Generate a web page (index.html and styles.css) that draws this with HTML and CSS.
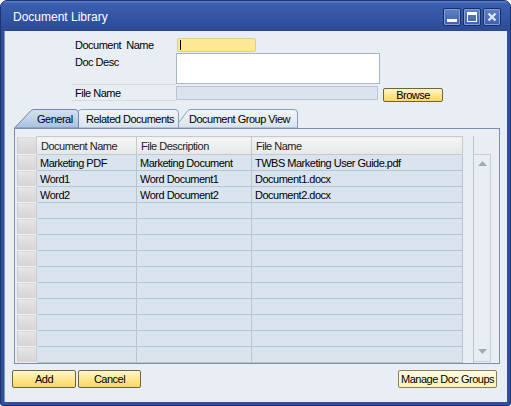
FILE: index.html
```html
<!DOCTYPE html>
<html lang="en">

<head>
  <meta charset="UTF-8">
  <meta name="viewport" content="width=device-width, initial-scale=1.0">
  <title>Document Library</title>
  <link rel="stylesheet" href="styles.css">
</head>

<body>
  <div class="window">

    <div class="titlebar">
      <span class="title">Document Library</span>
      <div class="caption-buttons">
        <span class="caption-btn">
          <svg width="16" height="16" viewBox="0 0 16 16"><rect x="3" y="10" width="10" height="3" fill="#fff"/></svg>
        </span>
        <span class="caption-btn">
          <svg width="16" height="16" viewBox="0 0 16 16"><rect x="3.5" y="3.5" width="9" height="9" fill="none" stroke="#fff"/><rect x="3" y="3" width="10" height="3" fill="#fff"/></svg>
        </span>
        <span class="caption-btn">
          <svg width="16" height="16" viewBox="0 0 16 16"><path d="M4.5 4.5 L11.5 11.5 M11.5 4.5 L4.5 11.5" stroke="#e4ebf8" stroke-width="2.2"/></svg>
        </span>
      </div>
    </div>

    <div class="content">

      <div class="form">
        <div class="form-row row-name">
          <label class="form-label">Document&nbsp; Name</label>
          <div class="field field-name"><span class="caret"></span></div>
        </div>
        <div class="form-row row-desc">
          <label class="form-label">Doc Desc</label>
          <div class="field field-desc"></div>
        </div>
        <div class="form-row row-file">
          <label class="form-label">File Name</label>
          <div class="field field-file"></div>
          <button class="btn btn-browse">Browse</button>
        </div>
      </div>

      <div class="tabs">
        <div class="tab tab-general active">
          <svg class="tab-shape" width="65" height="19" viewBox="0 0 65 19">
            <defs>
              <linearGradient id="tabOn" x1="0" y1="0" x2="0" y2="1">
                <stop offset="0" stop-color="#d4e2f2"/>
                <stop offset="1" stop-color="#a9c1df"/>
              </linearGradient>
            </defs>
            <path d="M0.5 19 L16.5 2 Q18 0.5 20 0.5 L61 0.5 Q64.5 0.5 64.5 4 L64.5 19 Z" fill="url(#tabOn)" stroke="#6f89ab"/>
          </svg>
          <span class="tab-label">General</span>
        </div>
        <div class="tab tab-related">
          <svg class="tab-shape" width="117" height="19" viewBox="0 0 117 19">
            <defs>
              <linearGradient id="tabOff" x1="0" y1="0" x2="0" y2="1">
                <stop offset="0" stop-color="#f1f5f9"/>
                <stop offset="1" stop-color="#d9e3ee"/>
              </linearGradient>
            </defs>
            <path d="M0.5 19 L16.5 2 Q18 0.5 20 0.5 L113 0.5 Q116.5 0.5 116.5 4 L116.5 19 Z" fill="url(#tabOff)" stroke="#8a9fb8"/>
          </svg>
          <span class="tab-label">Related Documents</span>
        </div>
        <div class="tab tab-group">
          <svg class="tab-shape" width="124" height="19" viewBox="0 0 124 19">
            <path d="M0.5 19 L13.5 2 Q15 0.5 17 0.5 L120 0.5 Q123.5 0.5 123.5 4 L123.5 19 Z" fill="url(#tabOff)" stroke="#8a9fb8"/>
          </svg>
          <span class="tab-label">Document Group View</span>
        </div>
      </div>

      <div class="tab-panel">
        <div class="grid-box">
          <table class="grid">
            <colgroup>
              <col class="col-rh">
              <col class="col-name">
              <col class="col-desc">
              <col class="col-file">
            </colgroup>
            <thead>
              <tr>
                <th class="rh"></th>
                <th>Document Name</th>
                <th>File Description</th>
                <th>File Name</th>
              </tr>
            </thead>
            <tbody>
              <tr><td class="rh"></td><td>Marketing PDF</td><td>Marketing Document</td><td>TWBS Marketing User Guide.pdf</td></tr>
              <tr><td class="rh"></td><td>Word1</td><td>Word Document1</td><td>Document1.docx</td></tr>
              <tr><td class="rh"></td><td>Word2</td><td>Word Document2</td><td>Document2.docx</td></tr>
              <tr><td class="rh"></td><td></td><td></td><td></td></tr>
              <tr><td class="rh"></td><td></td><td></td><td></td></tr>
              <tr><td class="rh"></td><td></td><td></td><td></td></tr>
              <tr><td class="rh"></td><td></td><td></td><td></td></tr>
              <tr><td class="rh"></td><td></td><td></td><td></td></tr>
              <tr><td class="rh"></td><td></td><td></td><td></td></tr>
              <tr><td class="rh"></td><td></td><td></td><td></td></tr>
              <tr><td class="rh"></td><td></td><td></td><td></td></tr>
              <tr><td class="rh"></td><td></td><td></td><td></td></tr>
              <tr><td class="rh"></td><td></td><td></td><td></td></tr>
            </tbody>
          </table>
          <div class="scrollbar">
            <div class="scroll-track">
              <svg width="9" height="5" viewBox="0 0 9 5"><path d="M0 5 L4.5 0 L9 5 Z" fill="#a3abb5"/></svg>
              <svg width="9" height="5" viewBox="0 0 9 5"><path d="M0 0 L4.5 5 L9 0 Z" fill="#a3abb5"/></svg>
            </div>
          </div>
        </div>
      </div>

      <div class="footer">
        <button class="btn btn-add">Add</button>
        <button class="btn btn-cancel">Cancel</button>
        <button class="btn btn-manage">Manage Doc Groups</button>
      </div>

    </div>
  </div>
</body>

</html>
```

FILE: styles.css
```css
body {
  margin: 0;
  background-color: #fff;
  font-family: "Liberation Sans", Arial, sans-serif;
  font-size: 11px;
  letter-spacing: -0.5px;
  color: #000;
}

.window {
  width: 511px;
  height: 406px;
  box-sizing: border-box;
  display: flex;
  flex-direction: column;
  background-color: #2f509b;
  border: 1px solid #1c3470;
  border-radius: 7px 7px 3px 3px;
  overflow: hidden;
}

/* title bar */

.titlebar {
  height: 30px;
  flex-shrink: 0;
  display: flex;
  align-items: center;
  justify-content: space-between;
  padding: 0 9px 0 12px;
  background: linear-gradient(#6181c8 0, #3b5eae 3px, #3355a4 55%, #2b4a95 100%);
}

.title {
  color: #fff;
  font-size: 12px;
  letter-spacing: 0;
  margin-top: 2px;
}

.caption-buttons {
  display: flex;
  gap: 2px;
  margin-top: 1px;
}

.caption-btn {
  width: 16px;
  height: 16px;
  display: flex;
  border: 1px solid #1a2e63;
  border-radius: 2px;
  background: linear-gradient(#5f80c9, #3e60ad);
  box-shadow: inset 0 0 0 1px #7f9dda;
}

/* content */

.content {
  flex: 1;
  margin: 0 3px 3px 3px;
  background-color: #e9eef4;
  border-left: 1px solid #7d95c4;
  display: flex;
  flex-direction: column;
  padding-top: 7px;
}

.form {
  margin-left: 67px;
}

.form-row {
  display: flex;
  align-items: flex-start;
}

.form-label {
  width: 101px;
  padding-left: 3px;
  box-sizing: content-box;
  line-height: 15px;
  white-space: nowrap;
}

.row-name {
  height: 14px;
  margin-bottom: 1px;
}

.row-desc {
  height: 32px;
  margin-bottom: 1px;
}

.row-desc .form-label,
.row-file .form-label {
  height: 100%;
  box-sizing: border-box;
  width: 104px;
  border-bottom: 1px solid #d3dbe4;
}

.row-desc .form-label {
  padding-top: 2px;
}

.row-file {
  height: 15px;
}

.field {
  box-sizing: border-box;
  border: 1px solid #b5c1ce;
}

.field-name {
  margin-left: 1px;
  width: 79px;
  height: 14px;
  background-color: #fce993;
  border-color: #e2cf7e;
  border-radius: 2px;
  position: relative;
}

.caret {
  position: absolute;
  left: 2px;
  top: 1px;
  width: 1px;
  height: 10px;
  background-color: #000;
}

.field-desc {
  width: 204px;
  height: 31px;
  background-color: #fff;
  border-color: #a9b5c3;
}

.field-file {
  width: 202px;
  height: 14px;
  background-color: #dbe4ee;
  border-color: #b9c5d2;
}

/* buttons */

.btn {
  font-family: inherit;
  font-size: 11px;
  letter-spacing: -0.5px;
  color: #000;
  padding: 0;
  border: 1px solid #6e6440;
  border-radius: 2px;
  background: linear-gradient(#fff7cd, #fde58a 55%, #f8d865);
  cursor: pointer;
  white-space: nowrap;
}

.btn-browse {
  width: 60px;
  height: 14px;
  line-height: 11px;
  margin: 2px 0 0 5px;
}

/* tabs */

.tabs {
  display: flex;
  height: 19px;
  margin: 8px 0 0 9px;
}

.tab {
  position: relative;
  height: 19px;
  flex-shrink: 0;
}

.tab-shape {
  position: absolute;
  left: 0;
  top: 0;
}

.tab-label {
  position: relative;
  display: block;
  line-height: 20px;
  white-space: nowrap;
}

.tab-general {
  width: 65px;
  z-index: 3;
}

.tab-general .tab-label {
  padding-left: 23px;
}

.tab-related {
  width: 117px;
  margin-left: -17px;
  z-index: 2;
}

.tab-related .tab-label {
  padding-left: 24px;
}

.tab-group {
  width: 124px;
  margin-left: -5px;
  z-index: 1;
}

.tab-group .tab-label {
  padding-left: 15px;
}

.tab-panel {
  margin-left: 9px;
  width: 486px;
  height: 236px;
  box-sizing: border-box;
  border: 1px solid #7990ad;
  background-color: #e8eef4;
  padding: 7px 0 0 2px;
}

.grid-box {
  display: flex;
}

.grid {
  border-collapse: collapse;
  table-layout: fixed;
  width: 445px;
}

.col-rh { width: 19px; }
.col-name { width: 100px; }
.col-desc { width: 115px; }
.col-file { width: 211px; }

.grid th,
.grid td {
  padding: 0 0 0 3px;
  border: 1px solid #b8c5d3;
  white-space: nowrap;
  overflow: hidden;
  text-align: left;
  font-weight: normal;
}

.grid thead tr {
  height: 18px;
}

.grid tbody tr {
  height: 16px;
}

.grid th {
  padding-left: 4px;
  background: linear-gradient(#f5f5f5, #e6e7e9);
  border-color: #c6cacf;
  color: #222;
}

.grid td {
  background-color: #dae4ee;
}

.grid .rh {
  padding: 0;
  background: linear-gradient(#e6e4e5, #d5d3d4);
  border-color: #eef0f2 #c9ccd0;
}

.scrollbar {
  margin-left: 10px;
  width: 17px;
  border-left: 1px solid #bcc7d3;
  padding-top: 18px;
}

.scroll-track {
  height: 208px;
  box-sizing: border-box;
  border: 1px solid #c5cfda;
  border-left: none;
  display: flex;
  flex-direction: column;
  justify-content: space-between;
  align-items: center;
  padding: 6px 0 7px;
}

/* footer buttons */

.footer {
  display: flex;
  margin: 6px 10px 0 7px;
}

.btn-add,
.btn-cancel,
.btn-manage {
  height: 18px;
}

.btn-add {
  width: 64px;
}

.btn-cancel {
  width: 63px;
  margin-left: 2px;
}

.btn-manage {
  width: 99px;
  margin-left: auto;
  background: linear-gradient(#fffce3, #fff2b6);
  border-color: #8b7f57;
}
```
